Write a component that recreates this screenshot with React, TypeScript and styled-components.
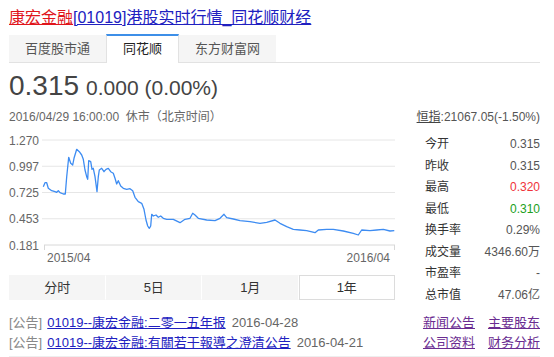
import { createGlobalStyle, styled } from "styled-components";

const GlobalStyle = createGlobalStyle`
  body {
    margin: 0;
    background: #fff;
    color: #333;
    font-family: "Liberation Sans", "Noto Sans CJK SC", sans-serif;
  }
`;

const yLabels = ["1.270", "0.997", "0.725", "0.453", "0.181"];

const points: [number, number][] = [
  [43.3, 186.7], [45, 182.7], [46.7, 182.7], [48.3, 188.3], [51.7, 190.7],
  [55, 191.7], [56.7, 192.3], [58.3, 190.7], [60, 192.7], [63.3, 194],
  [65.3, 194], [66.7, 176.7], [68.7, 157.3], [70.7, 163.3], [72.7, 165],
  [74, 158.3], [76.7, 149.3], [79.3, 151.7], [81.7, 155], [83.3, 159.3],
  [85, 170], [86.7, 176.7], [87.7, 179.3], [88.7, 160.7], [90.7, 161.7],
  [92, 169.3], [93.3, 168.3], [95, 176.7], [97, 191.7], [98.3, 176.7],
  [99.3, 170], [101.7, 168.3], [104, 171.7], [106, 169.3], [108.3, 168.3],
  [110.7, 171.7], [113.3, 173.3], [115, 178.3], [116.7, 184], [118.3, 180.7],
  [120.7, 186], [123.3, 188.3], [126.7, 189.3], [130, 188.7], [132.7, 190.7],
  [135, 197.3], [138.3, 201.7], [141.7, 203.3], [144, 209.3], [146, 220],
  [147.7, 226], [149.3, 228.3], [150.7, 226], [151.7, 214.3], [153.3, 216],
  [156, 215], [158.3, 217.3], [160.7, 216], [163.3, 218.3], [166.7, 219.3],
  [173.3, 219.3], [180, 222.7], [185, 219.3], [190, 218.3], [192.7, 213.3],
  [195, 215], [198.3, 218.3], [206.7, 220], [215, 220.7], [220, 218.3],
  [224, 214.3], [226.7, 217.7], [233.3, 219], [240, 220.7], [250, 221.7],
  [260, 223.3], [266.7, 222.3], [275, 220], [280, 223.3], [286.7, 226.7],
  [293.3, 229.3], [300, 230], [306.7, 230.7], [315, 232.7], [318.3, 230],
  [326.7, 229.3], [333.3, 229.3], [343.3, 231], [353.3, 233.3], [358.3, 235],
  [361.7, 230], [370, 230.7], [376.7, 230], [383.3, 229.3], [390, 231],
  [394.3, 230.7],
];

const stats = [
  { label: "今开", value: "0.315" },
  { label: "昨收", value: "0.315" },
  { label: "最高", value: "0.320", tone: "up" },
  { label: "最低", value: "0.310", tone: "down" },
  { label: "换手率", value: "0.29%" },
  { label: "成交量", value: "4346.60万" },
  { label: "市盈率", value: "-" },
  { label: "总市值", value: "47.06亿" },
];

const periods = ["分时", "5日", "1月", "1年"];

const notices = [
  {
    title: "01019--康宏金融:二零一五年报",
    date: "2016-04-28",
    links: ["新闻公告", "主要股东"],
  },
  {
    title: "01019--康宏金融:有關若干報導之澄清公告",
    date: "2016-04-21",
    links: ["公司资料", "财务分析"],
  },
];

const PriceChart = () => {
  const gridY = (i: number) => 140 + i * 26.25;
  return (
    <ChartSvg width={386} height={136} viewBox="9 130 386 136">
      {yLabels.map((label, i) => (
        <g key={label}>
          {i < 4 && (
            <line x1={42} x2={395} y1={gridY(i)} y2={gridY(i)} stroke="#e6e6e6" />
          )}
          <text x={9} y={gridY(i) + 4.5} fontSize={12} fill="#666">
            {label}
          </text>
        </g>
      ))}
      <line x1={44} x2={395} y1={245} y2={245} stroke="#d8d8d8" />
      <line x1={44.5} x2={44.5} y1={245} y2={250} stroke="#d8d8d8" />
      <line x1={394.5} x2={394.5} y1={245} y2={250} stroke="#d8d8d8" />
      <polyline
        points={points.map(([x, y]) => `${x},${y}`).join(" ")}
        fill="none"
        stroke="#3d8cf2"
        strokeWidth={1.3}
        strokeLinejoin="round"
      />
      <text x={47} y={262} fontSize={12} fill="#666">
        2015/04
      </text>
      <text x={390} y={262} fontSize={12} fill="#666" textAnchor="end">
        2016/04
      </text>
    </ChartSvg>
  );
};

const App = () => {
  return (
    <Page>
      <GlobalStyle />
      <Title>
        <RedLink href="#">康宏金融</RedLink>
        <BlueLink href="#">[01019]港股实时行情_同花顺财经</BlueLink>
      </Title>
      <SourceTabs>
        <SourceTab>百度股市通</SourceTab>
        <SourceTab $active>同花顺</SourceTab>
        <SourceTab>东方财富网</SourceTab>
      </SourceTabs>
      <Body>
        <LeftColumn>
          <PriceRow>
            <Price>0.315</Price>
            <Change>0.000 (0.00%)</Change>
          </PriceRow>
          <DateRow>2016/04/29 16:00:00&nbsp; 休市（北京时间）</DateRow>
          <PriceChart />
          <Periods>
            {periods.map((p) => (
              <Period key={p} $active={p === "1年"}>
                {p}
              </Period>
            ))}
          </Periods>
        </LeftColumn>
        <RightColumn>
          <IndexLine>
            <IndexName>恒指</IndexName>:21067.05(-1.50%)
          </IndexLine>
          <StatList>
            {stats.map((s) => (
              <StatRow key={s.label}>
                <StatLabel>{s.label}</StatLabel>
                <StatValue $tone={s.tone}>{s.value}</StatValue>
              </StatRow>
            ))}
          </StatList>
        </RightColumn>
      </Body>
      <Notices>
        {notices.map((n) => (
          <NoticeRow key={n.date}>
            <NoticeTag>[公告]</NoticeTag>
            <NoticeLink href="#">{n.title}</NoticeLink>
            <NoticeDate>{n.date}</NoticeDate>
            <QuickLinks>
              {n.links.map((l) => (
                <QuickLink key={l} href="#">
                  {l}
                </QuickLink>
              ))}
            </QuickLinks>
          </NoticeRow>
        ))}
      </Notices>
    </Page>
  );
};

const Page = styled.div`
  width: 531px;
  padding: 8px 0 0 9px;
`;

const Title = styled.h1`
  margin: 0;
  font-size: 16px;
  line-height: 20px;
  font-weight: normal;
  white-space: nowrap;
`;

const RedLink = styled.a`
  color: #e0151b;
  text-decoration: underline;
`;

const BlueLink = styled.a`
  color: #2020c0;
  text-decoration: underline;
`;

const SourceTabs = styled.div`
  display: flex;
  margin-top: 6px;
  height: 28px;
  border-bottom: 1px solid #e2e2e2;
`;

const SourceTab = styled.div<{ $active?: boolean }>`
  box-sizing: border-box;
  height: ${(p) => (p.$active ? "29px" : "27px")};
  margin-top: ${(p) => (p.$active ? "0" : "1px")};
  padding: 0 16px;
  font-size: 13px;
  line-height: ${(p) => (p.$active ? "26px" : "27px")};
  color: ${(p) => (p.$active ? "#222" : "#555")};
  background: ${(p) => (p.$active ? "#fff" : "#f5f5f5")};
  border-top: ${(p) => (p.$active ? "2px solid #3d8fe8" : "none")};
  border-left: ${(p) => (p.$active ? "1px solid #e2e2e2" : "none")};
  border-right: ${(p) => (p.$active ? "1px solid #e2e2e2" : "none")};
`;

const Body = styled.div`
  display: flex;
  margin-top: 7px;
`;

const LeftColumn = styled.div`
  width: 386px;
`;

const PriceRow = styled.div`
  display: flex;
  align-items: baseline;
  gap: 7px;
  line-height: 32px;
  color: #444;
`;

const Price = styled.span`
  font-size: 28px;
`;

const Change = styled.span`
  font-size: 21px;
`;

const DateRow = styled.div`
  margin-top: 5px;
  font-size: 12px;
  line-height: 16px;
  color: #666;
`;

const ChartSvg = styled.svg`
  display: block;
  margin-top: 5px;
  font-family: "Liberation Sans", sans-serif;
`;

const Periods = styled.div`
  display: flex;
  margin-top: 9px;
  height: 25px;
`;

const Period = styled.div<{ $active?: boolean }>`
  box-sizing: border-box;
  flex: 1;
  font-size: 13px;
  line-height: 23px;
  text-align: center;
  color: #333;
  background: ${(p) => (p.$active ? "#fff" : "#f5f5f5")};
  border: 1px solid ${(p) => (p.$active ? "#dcdcdc" : "#f5f5f5")};
  border-right-color: ${(p) => (p.$active ? "#dcdcdc" : "#fff")};
`;

const RightColumn = styled.div`
  width: 140px;
  margin-left: auto;
  padding-top: 39px;
`;

const IndexLine = styled.div`
  font-size: 12px;
  line-height: 16px;
  text-align: right;
  color: #555;
`;

const IndexName = styled.span`
  color: #444;
  text-decoration: underline;
`;

const StatList = styled.div`
  margin-top: 9px;
  padding-left: 25px;
`;

const StatRow = styled.div`
  display: flex;
  justify-content: space-between;
  height: 21.5px;
  font-size: 12px;
  line-height: 21.5px;
`;

const StatLabel = styled.span`
  color: #333;
`;

const StatValue = styled.span<{ $tone?: string }>`
  color: ${(p) =>
    p.$tone === "up" ? "#f0333a" : p.$tone === "down" ? "#21a021" : "#555"};
`;

const Notices = styled.div`
  margin-top: 7px;
  padding-bottom: 3px;
  border-bottom: 1px solid #eee;
`;

const NoticeRow = styled.div`
  display: flex;
  align-items: baseline;
  font-size: 13px;
  line-height: 20px;
  white-space: nowrap;
`;

const NoticeTag = styled.span`
  color: #888;
  margin-right: 5px;
`;

const NoticeLink = styled.a`
  color: #2020c0;
  text-decoration: underline;
`;

const NoticeDate = styled.span`
  margin-left: 6px;
  color: #666;
`;

const QuickLinks = styled.div`
  display: flex;
  gap: 13px;
  margin-left: auto;
`;

const QuickLink = styled.a`
  color: #6a2c91;
  text-decoration: underline;
`;

export default App;
